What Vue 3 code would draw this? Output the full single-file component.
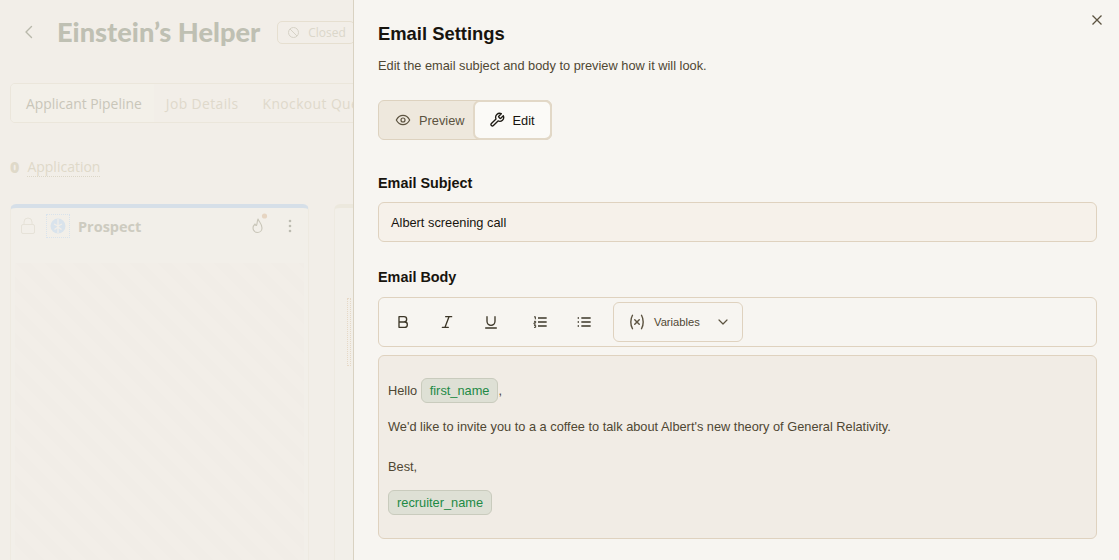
<script setup>
const tabs = ['Applicant Pipeline', 'Job Details', 'Knockout Questions']
</script>

<template>
  <div class="page">
    <div class="back">
      <header class="head">
        <svg class="chev" width="12" height="14" viewBox="0 0 12 14" fill="none"><path d="M8.500 1.500 3 7l5.500 5.500" stroke="#b9b8ab" stroke-width="1.400" stroke-linecap="round" stroke-linejoin="round"/></svg>
        <h1 class="job">Einstein’s Helper</h1>
        <span class="status">
          <svg width="13" height="13" viewBox="0 0 13 13" fill="none"><circle cx="6.500" cy="6.500" r="5" stroke="#d6d2c6" stroke-width="1"/><path d="M3 3l7 7" stroke="#d6d2c6" stroke-width="1"/></svg>
          Closed
        </span>
      </header>
      <nav class="tabs">
        <span v-for="(t, i) in tabs" :key="t" class="tab" :class="{ on: i === 0 }">{{ t }}</span>
      </nav>
      <div class="stage"><b>0</b><span>Application</span></div>
      <div class="cols">
        <section class="col">
          <div class="colhead">
            <svg width="16" height="18" viewBox="0 0 16 18" fill="none"><rect x="1.500" y="7.500" width="13" height="9" rx="1.500" stroke="#e6e2d8"/><path d="M4 7.500V5a4 4 0 0 1 8 0v2.500" stroke="#e6e2d8"/></svg>
            <span class="brain">
              <svg width="18" height="18" viewBox="0 0 18 18" fill="none"><circle cx="9" cy="9" r="7.500" fill="#d9e3ec"/><path d="M9 2v14M5 7l4 2 4-2M5.500 12.500 9 10l3.500 2.500" stroke="#f2eee8" stroke-width="1.300"/></svg>
            </span>
            <span class="colname">Prospect</span>
            <svg class="flame" width="18" height="24" viewBox="0 0 18 24" fill="none"><circle cx="13.500" cy="4" r="2.600" fill="#e6d5c2"/><path d="M7 7c1 3 4 4.500 4 9a4.500 4.500 0 0 1-9 0c0-2 1-3 2-4 .3 1 1 1.500 1.500 1.500C6.500 11 6 9 7 7Z" stroke="#c9c6b9" stroke-width="1.100" stroke-linejoin="round"/></svg>
            <svg width="4" height="14" viewBox="0 0 4 14"><circle cx="2" cy="2" r="1.300" fill="#bdbcb2"/><circle cx="2" cy="7" r="1.300" fill="#bdbcb2"/><circle cx="2" cy="12" r="1.300" fill="#bdbcb2"/></svg>
          </div>
          <div class="colbody"></div>
        </section>
        <section class="col next">
          <div class="stub"></div>
        </section>
      </div>
    </div>

    <aside class="drawer">
      <svg class="close" width="12" height="12" viewBox="0 0 12 12" fill="none"><path d="M1.500 1.500l9 9M10.500 1.500l-9 9" stroke="#5c5340" stroke-width="1.300"/></svg>
      <h2 class="title">Email Settings</h2>
      <p class="sub">Edit the email subject and body to preview how it will look.</p>

      <div class="toggle">
        <span class="opt">
          <svg width="16" height="16" viewBox="0 0 24 24" fill="none" stroke="#5c5340" stroke-width="1.800"><path d="M2 12s3.600-7 10-7 10 7 10 7-3.600 7-10 7-10-7-10-7Z"/><circle cx="12" cy="12" r="3"/></svg>
          Preview
        </span>
        <span class="opt active">
          <svg width="16" height="16" viewBox="0 0 24 24" fill="none" stroke="#1d1a14" stroke-width="2" stroke-linecap="round" stroke-linejoin="round"><path d="M14.700 6.300a1 1 0 0 0 0 1.400l1.600 1.600a1 1 0 0 0 1.400 0l3.770-3.770a6 6 0 0 1-7.940 7.940l-6.910 6.910a2.120 2.120 0 0 1-3-3l6.910-6.910a6 6 0 0 1 7.940-7.940l-3.760 3.760Z"/></svg>
          Edit
        </span>
      </div>

      <h3 class="label first">Email Subject</h3>
      <div class="input">Albert screening call</div>

      <h3 class="label second">Email Body</h3>
      <div class="toolbar">
        <svg class="tool" width="16" height="16" viewBox="0 0 24 24" fill="none" stroke="#3d3728" stroke-width="2" stroke-linejoin="round"><path d="M6 4h7.500a4 4 0 0 1 0 8H6Zm0 8h8.500a4 4 0 0 1 0 8H6Z"/></svg>
        <svg class="tool t2" width="16" height="16" viewBox="0 0 24 24" fill="none" stroke="#3d3728" stroke-width="2" stroke-linecap="round"><path d="M10 4h9M5 20h9M15 4 9 20"/></svg>
        <svg class="tool t3" width="16" height="16" viewBox="0 0 24 24" fill="none" stroke="#3d3728" stroke-width="2" stroke-linecap="round"><path d="M6 4v7a6 6 0 0 0 12 0V4M4 21h16"/></svg>
        <svg class="tool t4" width="16" height="16" viewBox="0 0 24 24" fill="none" stroke="#3d3728" stroke-width="2.600"><path d="M9 6h13M9 12h13M9 18h13"/><path d="M3 4.500 5 4v4M3 11h2.500v2.200H3v2h2.500M3 17h2.500v3H3" stroke-width="1.500"/></svg>
        <svg class="tool t5" width="16" height="16" viewBox="0 0 24 24" fill="none" stroke="#3d3728" stroke-width="2.600"><path d="M8 6h14M8 12h14M8 18h14"/><path d="M2.500 6h2M2.500 12h2M2.500 18h2" stroke-width="2"/></svg>
        <div class="vars">
          <svg width="18" height="18" viewBox="0 0 24 24" fill="none" stroke="#5c5340" stroke-width="1.900" stroke-linecap="round"><path d="M6 3C3 8 3 16 6 21M18 3c3 5 3 13 0 18M9 9l6 6M15 9l-6 6"/></svg>
          <span class="varstext">Variables</span>
          <svg width="10" height="10" viewBox="0 0 10 10" fill="none" stroke="#5c5340" stroke-width="1.200" stroke-linecap="round" stroke-linejoin="round"><path d="M1 3l4 4 4-4"/></svg>
        </div>
      </div>

      <div class="editor">
        <p class="line hello">Hello <span class="chip">first_name</span>,</p>
        <p class="line invite">We'd like to invite you to a a coffee to talk about Albert's new theory of General Relativity.</p>
        <p class="line best">Best,</p>
        <p class="line sign"><span class="chip">recruiter_name</span></p>
      </div>
    </aside>
  </div>
</template>

<style scoped>
.page {
  position: relative;
  width: 1119px;
  height: 560px;
  overflow: hidden;
  background: #f2eee8;
  font-family: "Liberation Sans", Arial, sans-serif;
}
.back {
  height: 100%;
  padding: 0 10px;
  box-sizing: border-box;
  font-family: Lato, "Open Sans", sans-serif;
}
.head {
  display: flex;
  align-items: center;
  height: 64px;
  padding-left: 13px;
}
.chev { margin-right: 22px; }
.job {
  margin: 0 17px 0 0;
  font-size: 27.200px;
  line-height: 64px;
  font-weight: 900;
  color: #bfc0b3;
  white-space: nowrap;
}
.status {
  display: flex;
  align-items: center;
  gap: 8px;
  flex: none;
  width: 78px;
  height: 23px;
  box-sizing: border-box;
  padding-left: 9px;
  border: 1px solid #e6dfd0;
  border-radius: 5px;
  font-family: "Open Sans", sans-serif;
  font-size: 12px;
  color: #dbd7ca;
}
.tabs {
  display: flex;
  width: 360px;
  height: 40px;
  margin-top: 19px;
  box-sizing: border-box;
  border: 1px solid #ebe6db;
  border-radius: 5px;
  align-items: stretch;
  overflow: hidden;
  font-family: "Open Sans", sans-serif;
  font-size: 13.900px;
  white-space: nowrap;
}
.tab {
  display: flex;
  align-items: center;
  flex: none;
  padding: 0 12px;
  letter-spacing: 0.400px;
  color: #dfd9cb;
}
.tab.on {
  padding: 0 12px 0 15px;
  letter-spacing: 0;
  background: #f3f0e9;
  color: #c9c6b9;
}
.stage {
  display: flex;
  align-items: center;
  gap: 8px;
  margin-top: 34px;
  height: 20px;
  font-family: "Open Sans", sans-serif;
  font-size: 14px;
  color: #dfd9c9;
}
.stage span { border-bottom: 1px dotted #dcd7c8; }
.stage b { font-weight: 800; font-size: 16px; }
.cols {
  display: flex;
  gap: 25px;
  margin-top: 27px;
}
.col {
  flex: none;
  width: 299px;
  height: 400px;
  box-sizing: border-box;
  border: 1px solid #eeeae1;
  border-top: 4px solid #d6dfe8;
  border-radius: 6px 6px 0 0;
  background: #f2efe9;
}
.col.next {
  border-top-color: #ece8dd;
  display: flex;
  align-items: flex-start;
  padding: 90px 0 0 12px;
}
.stub {
  width: 2px;
  height: 66px;
  border: 1px dotted #e6d8c6;
}
.colhead {
  display: flex;
  align-items: center;
  height: 36px;
  padding: 0 16px 0 9px;
  box-sizing: border-box;
}
.brain {
  display: flex;
  align-items: center;
  justify-content: center;
  width: 24px;
  height: 24px;
  box-sizing: border-box;
  margin-left: 10px;
  border: 1px dotted #d9e3ec;
}
.colname {
  margin-left: 8px;
  flex: 1;
  font-family: "Open Sans", sans-serif;
  font-size: 14.500px;
  font-weight: 700;
  color: #cdcbc0;
}
.flame { margin-right: 19px; margin-top: -4px; }
.colbody {
  height: 100%;
  margin: 19px 4px 0;
  background: repeating-linear-gradient(45deg, #f1ede7 0 10px, #f2eee8 10px 20px);
}

.drawer {
  position: absolute;
  top: 0;
  right: 0;
  bottom: 0;
  width: 766px;
  box-sizing: border-box;
  padding: 0 22px 0 24px;
  background: #f7f5f1;
  border-left: 1px solid #d9d2c2;
}
.close { position: absolute; top: 14px; right: 16px; }
.title {
  margin: 0;
  padding-top: 22px;
  font-size: 18.400px;
  line-height: 23px;
  font-weight: 700;
  color: #17140e;
}
.sub {
  margin: 13px 0 0;
  font-size: 12.800px;
  line-height: 15px;
  color: #4f4733;
}
.toggle {
  display: inline-flex;
  align-items: stretch;
  height: 40px;
  margin-top: 27px;
  box-sizing: border-box;
  border: 1px solid #ddd2bf;
  border-radius: 6px;
  background: #eee8dd;
}
.opt {
  display: flex;
  align-items: center;
  gap: 8px;
  padding: 0 8px 0 16px;
  font-size: 12.800px;
  color: #5c5340;
}
.opt.active {
  padding: 0 15px 0 14px;
  background: #fbfaf7;
  border: 2px solid #e2d8c7;
  border-radius: 7px;
  color: #17140e;
  margin: -1px -1px -1px 0;
}
.label {
  margin: 0;
  font-size: 14.400px;
  line-height: 18px;
  font-weight: 700;
  color: #17140e;
}
.first { margin-top: 34px; }
.second { margin-top: 26px; }
.input {
  display: flex;
  align-items: center;
  height: 40px;
  margin-top: 10px;
  padding: 0 12px;
  box-sizing: border-box;
  border: 1px solid #dfd2bf;
  border-radius: 6px;
  background: #f6f1ea;
  font-size: 12.800px;
  color: #17140e;
}
.toolbar {
  display: flex;
  align-items: center;
  height: 50px;
  margin-top: 11px;
  padding-left: 16px;
  box-sizing: border-box;
  border: 1px solid #dfd2bf;
  border-radius: 6px;
}
.tool { flex: none; }
.t2 { margin-left: 28px; }
.t3 { margin-left: 28px; }
.t4 { margin-left: 33px; }
.t5 { margin-left: 28px; }
.vars {
  display: flex;
  align-items: center;
  width: 130px;
  height: 40px;
  margin-left: 21px;
  padding: 0 14px;
  box-sizing: border-box;
  border: 1px solid #dfd2bf;
  border-radius: 6px;
}
.varstext {
  flex: 1;
  margin-left: 8px;
  font-size: 11.200px;
  color: #4f4733;
}
.editor {
  height: 184px;
  margin-top: 8px;
  padding: 0 9px;
  box-sizing: border-box;
  border: 1px solid #dfd2bf;
  border-radius: 6px;
  background: #f1ece5;
  font-size: 12.800px;
  color: #4f4733;
}
.line { margin: 0; line-height: 24px; }
.hello { margin-top: 22px; }
.invite { margin-top: 12px; }
.best { margin-top: 16px; }
.sign { margin-top: 11px; }
.chip {
  display: inline-block;
  padding: 0 8px;
  line-height: 23px;
  border: 1px solid #c9cbbd;
  border-radius: 6px;
  background: #dee0d5;
  color: #1d8a45;
}
</style>
